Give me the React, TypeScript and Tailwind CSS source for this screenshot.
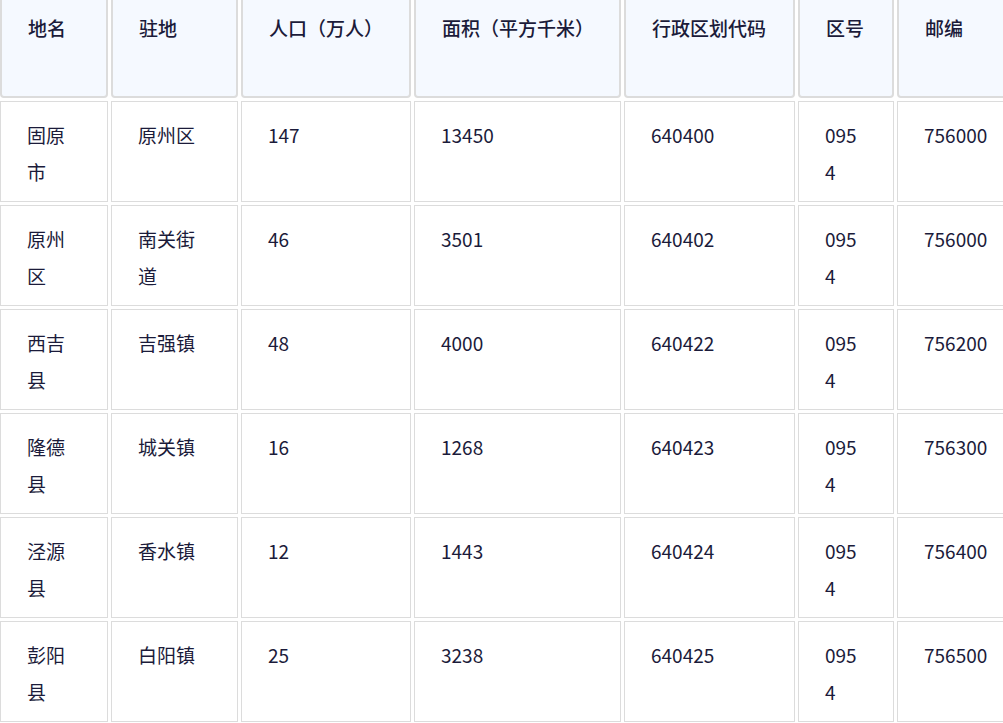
const head = ["地名", "驻地", "人口（万人）", "面积（平方千米）", "行政区划代码", "区号", "邮编"];
const rows = [
  ["固原市", "原州区", "147", "13450", "640400", "0954", "756000"],
  ["原州区", "南关街道", "46", "3501", "640402", "0954", "756000"],
  ["西吉县", "吉强镇", "48", "4000", "640422", "0954", "756200"],
  ["隆德县", "城关镇", "16", "1268", "640423", "0954", "756300"],
  ["泾源县", "香水镇", "12", "1443", "640424", "0954", "756400"],
  ["彭阳县", "白阳镇", "25", "3238", "640425", "0954", "756500"],
];

export default function App() {
  return (
    <div
      className="w-[1003px] h-[723px] overflow-hidden bg-white text-[#1b1b3a]"
      style={{ fontFamily: '"Noto Sans CJK SC", "Noto Sans", sans-serif' }}
    >
      <div className="grid grid-cols-[108px_127px_170px_207px_171px_96px_120px] gap-[3px] w-max -mt-[9px]">
        {head.map((h) => (
          <div key={h} className="h-[107px] border-2 border-[#dcdcdc] rounded-[4px] bg-[#f5f9ff] px-[26px] pt-[16px] text-[19px] leading-[37px] font-medium break-all">
            {h}
          </div>
        ))}
        {rows.map((r, i) =>
          r.map((c, j) => (
            <div key={i + "-" + j} className="h-[101px] border border-[#dcdcdc] px-[26px] pt-[14px] text-[19px] leading-[37px] break-all">
              {c}
            </div>
          ))
        )}
      </div>
    </div>
  );
}
